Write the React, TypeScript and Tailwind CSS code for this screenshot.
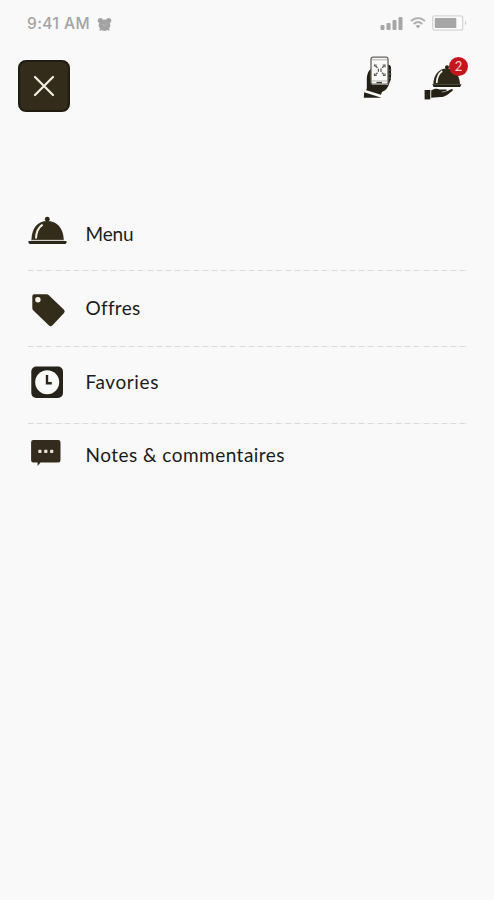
import type { ReactNode } from "react";

function AlarmIcon() {
  return (
    <svg width="15" height="15" viewBox="0 0 16 16" fill="#a3a3a3">
      <circle cx="8" cy="8.8" r="6.2" />
      <circle cx="3.6" cy="3.8" r="2.8" />
      <circle cx="12.4" cy="3.8" r="2.8" />
      <path d="M4 12.5 3.2 14.4M12 12.5l.8 1.9" stroke="#a3a3a3" strokeWidth="1.8" />
      <path d="M5.6 7.6 8 9.4l2.6-2.4" fill="none" stroke="#bdbdbd" strokeWidth="1" />
    </svg>
  );
}

function SignalIcon() {
  return (
    <svg width="23" height="15" viewBox="0 0 23 15" fill="#a6a6a6">
      <rect x="0.5" y="9" width="4" height="5" rx="1" />
      <rect x="6.5" y="7" width="4" height="7" rx="1" />
      <rect x="12.5" y="4" width="4" height="10" rx="1" />
      <rect x="18.5" y="1" width="4" height="13" rx="1" />
    </svg>
  );
}

function WifiIcon() {
  return (
    <svg width="16" height="14" viewBox="0 0 16 14" fill="none" stroke="#adadad" strokeWidth="1.8">
      <path d="M1 5.2C5 1.1 11 1.1 15 5.2" />
      <path d="M3.7 8C6.4 5.5 9.6 5.5 12.3 8" />
      <path d="M5.6 9.8Q8 8 10.4 9.8L8 12.6Z" fill="#a8a8a8" stroke="none" />
    </svg>
  );
}

function BatteryIcon() {
  return (
    <svg width="36" height="16" viewBox="0 0 36 16">
      <rect x="0.7" y="0.8" width="30" height="14.4" rx="2" fill="#fbfbfb" stroke="#d6d6d6" strokeWidth="1.3" />
      <rect x="2.8" y="3" width="21.5" height="10" rx="0.8" fill="#a6a6a6" />
      <path d="M33 5.5q2.5 2.5 0 5z" fill="#cccccc" />
    </svg>
  );
}

function PhoneHandIcon() {
  return (
    <svg width="32" height="44" viewBox="0 0 32 44">
      <path d="M9 12C4.5 15 3.6 20 3.8 25v7.5l-1.2 2.5L17.5 40l1.5-4q6-3 7-8l2-5V11q-.5-2.5-3-2.5V29H9z" fill="#252016" />
      <path d="M1.2 36.2 18.5 41.8H.8z" fill="#252016" />
      <path d="M1.5 34.6 18.5 39.8" stroke="#f9f9f9" strokeWidth="1.8" />
      <rect x="8" y="1.2" width="17" height="27" rx="2" fill="#fafafa" stroke="#66625b" strokeWidth="1.3" />
      <path d="M9 3.8h15M9 25h15" stroke="#aaa7a1" strokeWidth="0.9" />
      <path d="M13.5 26.6h5.5" stroke="#39352d" strokeWidth="1.3" />
      <path
        d="M11.5 10.5V9h2.2M19.8 9H22v2.2M11.5 17.5v2h2.2M19.8 19.5H22v-2M12.5 10l2 1.8M21 10l-2 1.8M12.5 18.5l2-1.8M21 18.5l-2-1.8M15.4 12.8v3M18 12.4v3.6"
        fill="none"
        stroke="#5c5850"
        strokeWidth="1.2"
      />
      <path d="M26 14h3M26 18h3M26 22h2" stroke="#8d8a84" strokeWidth="0.7" />
    </svg>
  );
}

function ServingHandIcon() {
  return (
    <svg width="40" height="36" viewBox="0 0 40 36">
      <circle cx="23" cy="3.2" r="2" fill="#252016" />
      <path d="M9.3 20.2C9.5 10.5 15 4.5 22.8 4.5S35.5 10.5 36 20.2z" fill="#2f2919" />
      <path d="M12.7 19C12.8 13 14.8 9.4 18.2 7" fill="none" stroke="#f7f5ec" strokeWidth="1.7" />
      <path d="M8.2 20.3h29.3l-1.4 2.7H9.7z" fill="#252016" />
      <path d="M.6 26h5.7v9.4H.6z" fill="#252016" />
      <path
        d="M7.2 26.6c3-2 5.6-2.4 8.6-1h6.5q1.4.8-.5 1.7l-5 .8c4.7.5 7.5-1.8 11-3.2q1.9.1.9 1.5C25 29.5 21.5 32.8 16.5 33L7.2 33.8z"
        fill="#252016"
      />
    </svg>
  );
}

function ClocheIcon() {
  return (
    <svg width="40" height="30" viewBox="0 0 40 30">
      <circle cx="19.3" cy="4.2" r="2.4" fill="#2b2618" />
      <path d="M3.4 25C3.8 12.4 10 6 19.3 6S35.3 12.4 35.8 25z" fill="#332c1b" />
      <path d="M8 23.5C8.1 17 10.6 12.3 14.6 9.6" fill="none" stroke="#f2efe4" strokeWidth="2" />
      <path d="M3 25.2h33" stroke="#a9a492" strokeWidth="0.7" />
      <path d="M.5 26h38v1.4l-1 1.5H1.5l-1-1.5z" fill="#2b2618" />
    </svg>
  );
}

function TagIcon() {
  return (
    <svg width="40" height="36" viewBox="0 0 40 36">
      <path
        d="M6.3 2.2h12.2q1.4 0 2.4 1L36 17.8q1.5 1.7 0 3.3L24.3 33.5q-1.7 1.5-3.3 0L5.4 18.5q-1.1-1-1.1-2.5V4.2q0-2 2-2z"
        fill="#332c1b"
      />
      <circle cx="9.9" cy="7.7" r="2.7" fill="#f5f2e8" />
    </svg>
  );
}

function ClockIcon() {
  return (
    <svg width="40" height="36" viewBox="0 0 40 36">
      <rect x="3.3" y="2.5" width="31.7" height="31.5" rx="5" fill="#28231a" />
      <circle cx="19.2" cy="18.3" r="12" fill="#fafaf8" />
      <path d="M19 11v8.2h4.8" fill="none" stroke="#2b261b" strokeWidth="2.4" />
    </svg>
  );
}

function CommentIcon() {
  return (
    <svg width="40" height="32" viewBox="0 0 40 32">
      <path
        d="M5.3 2h25q2.2 0 2.2 2.2v18q0 2.2-2.2 2.2H12.5L9.6 28v-3.6H5.3q-2.2 0-2.2-2.2v-18Q3.1 2 5.3 2z"
        fill="#332c1e"
      />
      <g fill="#e9e4d6">
        <rect x="10.3" y="11.8" width="3.2" height="3.2" rx="0.7" />
        <rect x="16.2" y="11.8" width="3.2" height="3.2" rx="0.7" />
        <rect x="22.1" y="11.8" width="3.2" height="3.2" rx="0.7" />
      </g>
    </svg>
  );
}

interface MenuRowProps {
  icon: ReactNode;
  children: ReactNode;
}

function MenuRow({ icon, children }: MenuRowProps) {
  return (
    <button className="flex w-full items-start text-left text-[19px] leading-6 whitespace-nowrap text-[#1c1c1c]">
      <span className="w-[57.5px] shrink-0">{icon}</span>
      {children}
    </button>
  );
}

function Divider() {
  return (
    <div className="h-px w-[440px] bg-[repeating-linear-gradient(90deg,#d9d9d9_0,#d9d9d9_5px,#f2f2f2_5px,#f2f2f2_9.2px)]" />
  );
}

export default function App() {
  return (
    <div className="h-[900px] w-[494px] overflow-hidden bg-[#f9f9f9] font-['Lato','Liberation_Sans',sans-serif]">
      {/* Status bar */}
      <div className="flex h-[46px] items-center pr-[26px] pl-[27px] text-[#a3a3a3]">
        <span className="pt-[2px] font-['Inter','Liberation_Sans',sans-serif] text-[15.5px] font-medium tracking-[0.45px]">
          9:41 AM
        </span>
        <span className="ml-[7px] pt-[2px]">
          <AlarmIcon />
        </span>
        <div className="ml-auto flex items-center">
          <SignalIcon />
          <span className="ml-[7px]">
            <WifiIcon />
          </span>
          <span className="ml-[6px]">
            <BatteryIcon />
          </span>
        </div>
      </div>

      {/* Header */}
      <header className="flex h-[66px] items-start pt-[14px] pl-[18px]">
        <button className="flex size-[52px] items-center justify-center rounded-lg border-2 border-[#211c10] bg-[#332c1a]">
          <svg width="22" height="22" viewBox="0 0 22 22" stroke="#f3efe3" strokeWidth="2.2" strokeLinecap="round">
            <path d="m2 2 18 18M20 2 2 20" />
          </svg>
        </button>
        <div className="-mt-[4px] ml-[293px]">
          <PhoneHandIcon />
        </div>
        <div className="relative mt-[4px] ml-[29px]">
          <ServingHandIcon />
          <span className="absolute -top-[7px] left-[25px] flex size-[19px] items-center justify-center rounded-full bg-[#c5161d] text-[13px] leading-none text-[#f5d5d3]">
            2
          </span>
        </div>
      </header>

      {/* Menu list */}
      <nav className="pt-[103px] pl-[28px]">
        <div className="h-[55px]">
          <MenuRow icon={<ClocheIcon />}>
            <span className="pt-[7px] tracking-[-0.2px]">Menu</span>
          </MenuRow>
        </div>
        <Divider />
        <div className="h-[75px] pt-[21px]">
          <MenuRow icon={<TagIcon />}>
            <span className="pt-[4px] tracking-[0.3px]">Offres</span>
          </MenuRow>
        </div>
        <Divider />
        <div className="h-[76px] pt-[17px]">
          <MenuRow icon={<ClockIcon />}>
            <span className="pt-[6px] tracking-[0.6px]">Favories</span>
          </MenuRow>
        </div>
        <Divider />
        <div className="pt-[14px]">
          <MenuRow icon={<CommentIcon />}>
            <span className="pt-[5px] tracking-[0.47px]">Notes &amp; commentaires</span>
          </MenuRow>
        </div>
      </nav>
    </div>
  );
}
